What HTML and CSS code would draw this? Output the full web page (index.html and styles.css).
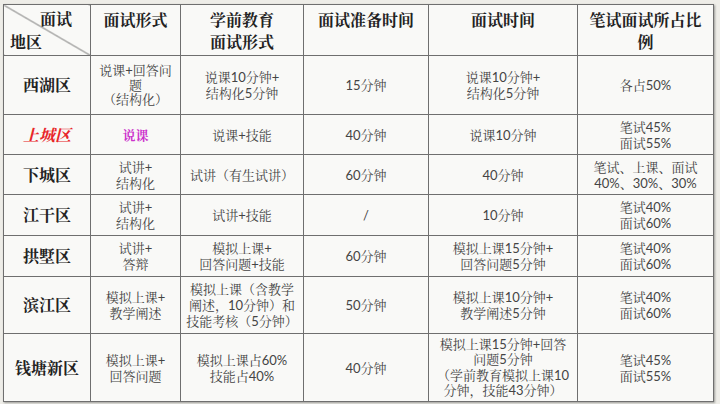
FILE: index.html
```html
<!DOCTYPE html>
<html lang="zh-CN">
<head>
<meta charset="utf-8">
<title>面试形式</title>
<link rel="stylesheet" href="styles.css">
</head>
<body>
<table class="grid">
  <colgroup>
    <col class="c0"><col class="c1"><col class="c2"><col class="c3"><col class="c4"><col class="c5">
  </colgroup>
  <tr class="r-head">
    <th class="diag"><div class="diag-in"><span class="d-top">面试</span><span class="d-bot">地区</span></div></th>
    <th>面试形式</th>
    <th>学前教育<br>面试形式</th>
    <th>面试准备时间</th>
    <th>面试时间</th>
    <th>笔试面试所占比例</th>
  </tr>
  <tr class="r1">
    <td class="area">西湖区</td>
    <td class="tight">说课+回答问<br>题<br>（结构化）</td>
    <td>说课10分钟+<br>结构化5分钟</td>
    <td>15分钟</td>
    <td>说课10分钟+<br>结构化5分钟</td>
    <td>各占50%</td>
  </tr>
  <tr class="r2">
    <td class="area red">上城区</td>
    <td class="pink">说课</td>
    <td>说课+技能</td>
    <td>40分钟</td>
    <td>说课10分钟</td>
    <td>笔试45%<br>面试55%</td>
  </tr>
  <tr class="r3">
    <td class="area">下城区</td>
    <td>试讲+<br>结构化</td>
    <td>试讲（有生试讲）</td>
    <td>60分钟</td>
    <td>40分钟</td>
    <td>笔试、上课、面试<br>40%、30%、30%</td>
  </tr>
  <tr class="r4">
    <td class="area">江干区</td>
    <td>试讲+<br>结构化</td>
    <td>试讲+技能</td>
    <td>/</td>
    <td>10分钟</td>
    <td>笔试40%<br>面试60%</td>
  </tr>
  <tr class="r5">
    <td class="area">拱墅区</td>
    <td>试讲+<br>答辩</td>
    <td>模拟上课+<br>回答问题+技能</td>
    <td>60分钟</td>
    <td>模拟上课15分钟+<br>回答问题5分钟</td>
    <td>笔试40%<br>面试60%</td>
  </tr>
  <tr class="r6">
    <td class="area">滨江区</td>
    <td>模拟上课+<br>教学阐述</td>
    <td>模拟上课（含教学<br>阐述，10分钟）和<br>技能考核（5分钟）</td>
    <td>50分钟</td>
    <td>模拟上课10分钟+<br>教学阐述5分钟</td>
    <td>笔试40%<br>面试60%</td>
  </tr>
  <tr class="r7">
    <td class="area">钱塘新区</td>
    <td>模拟上课+<br>回答问题</td>
    <td>模拟上课占60%<br>技能占40%</td>
    <td>40分钟</td>
    <td class="wide">模拟上课15分钟+回答<br>问题5分钟<br>（学前教育模拟上课10<br>分钟，技能43分钟）</td>
    <td>笔试45%<br>面试55%</td>
  </tr>
</table>
</body>
</html>
```

FILE: styles.css
```css
html, body {
  margin: 0;
  padding: 0;
  background: #eeede8;
}

body {
  padding: 4px 0 0 3px;
  width: 720px;
  height: 404px;
  box-sizing: border-box;
}

.grid {
  width: 710px;
  border-collapse: collapse;
  table-layout: fixed;
  background: #f9f9f7;
  box-shadow: 1px 1px 2px rgba(0, 0, 0, 0.35);
  font-family: "Lato", "Noto Serif CJK SC", "Noto Sans CJK SC", sans-serif;
  color: #444;
  font-size: 13px;
  line-height: 16px;
}

.c0 { width: 87px; }
.c1 { width: 90px; }
.c2 { width: 123px; }
.c3 { width: 125px; }
.c4 { width: 149px; }
.c5 { width: 136px; }

.grid th,
.grid td {
  border: 1px solid #6f6f6f;
  text-align: center;
  padding: 0 4px;
}

.grid th {
  vertical-align: top;
  font-family: "Noto Serif CJK SC", "Noto Sans CJK SC", sans-serif;
  font-size: 16px;
  line-height: 22px;
  font-weight: 700;
  color: #222;
  padding-top: 4px;
}

.grid td {
  vertical-align: middle;
}

.grid td.tight {
  line-height: 14.5px;
}

.grid td.wide {
  padding: 0 2px;
  line-height: 15.3px;
}

.r-head { height: 50px; }
.r1 { height: 59px; }
.r2 { height: 40px; }
.r3 { height: 40px; }
.r4 { height: 41px; }
.r5 { height: 41px; }
.r6 { height: 57px; }
.r7 { height: 68px; }

.grid th.diag {
  padding: 0;
  background: linear-gradient(to top right, transparent calc(50% - 0.8px), #666 50%, transparent calc(50% + 0.8px));
}

.diag-in {
  height: 50px;
  display: flex;
  flex-direction: column;
  justify-content: space-between;
  padding: 5px 0 4px 0;
  box-sizing: border-box;
}

.d-top {
  align-self: flex-end;
  padding-right: 18px;
  line-height: 18px;
}

.d-bot {
  align-self: flex-start;
  padding-left: 6px;
  line-height: 18px;
}

.grid td.area {
  font-family: "Noto Serif CJK SC", "Noto Sans CJK SC", sans-serif;
  font-size: 16px;
  font-weight: 700;
  color: #222;
}

.grid td.red {
  color: #e8262a;
  font-style: italic;
}

.grid td.pink {
  color: #cc33cc;
  font-weight: 700;
}
```
